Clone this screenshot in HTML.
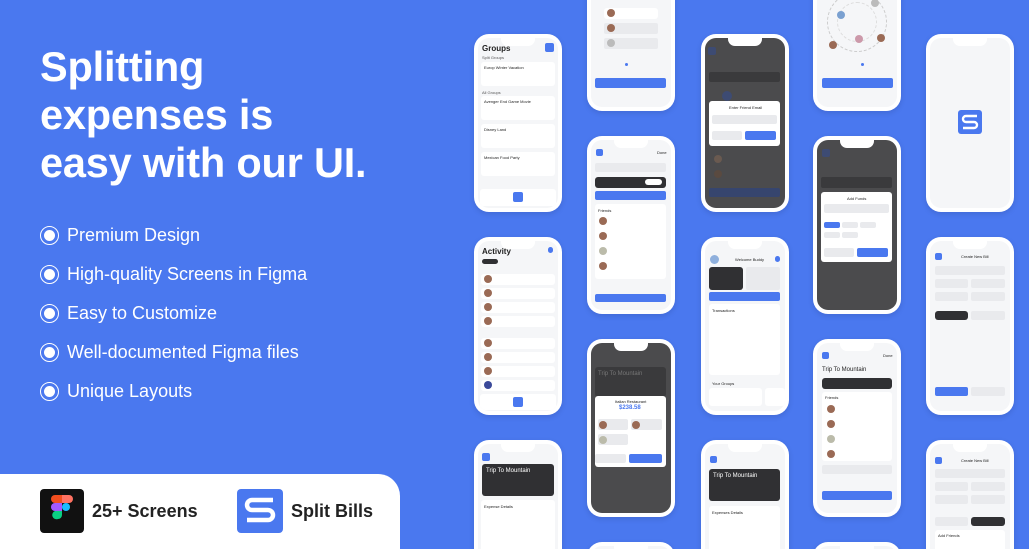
<!DOCTYPE html>
<html style="width:1029px;height:549px;overflow:hidden"><head><meta charset="utf-8"><style>
*{margin:0;padding:0;box-sizing:border-box}
body{width:1029px;height:549px;overflow:hidden;background:#4a78ef;font-family:"Liberation Sans",sans-serif;position:relative}
h1{position:absolute;left:40px;top:43px;color:#fff;font-size:41.5px;line-height:48px;font-weight:700;letter-spacing:-0.2px}
.li{position:absolute;left:40px;color:#fff;font-size:18px;height:20px;line-height:20px}
.li i{position:absolute;left:0;top:1px;width:19px;height:19px;border:1.5px solid #fff;border-radius:50%}
.li i:after{content:"";position:absolute;left:2.5px;top:2.5px;width:11px;height:11px;border-radius:50%;background:#fff}
.li span{position:absolute;left:27px;white-space:nowrap}
.bot{position:absolute;left:0;top:474px;width:400px;height:75px;background:#fff;border-top-right-radius:22px}
.ph{position:absolute;width:88px;height:178px;background:#fff;border-radius:15px;box-shadow:0 2px 6px rgba(0,0,30,.12);overflow:hidden}
.sc{position:absolute;left:4px;top:4px;width:80px;height:170px;background:#f5f6f8;border-radius:11px;overflow:hidden}
.nt{position:absolute;left:27px;top:4px;width:34px;height:8px;background:#fff;border-radius:0 0 7px 7px;z-index:5}
.dk .sc{background:#4b4b4d}
.a{position:absolute}
.w{background:#fff;border-radius:3px}
.g{background:#e9eaed;border-radius:2px}
.b{background:#4a78ef;border-radius:2px}
.d{background:#303033;border-radius:3px}
.t{position:absolute;font-size:4px;color:#555;white-space:nowrap}
.tt{position:absolute;font-size:8px;font-weight:700;color:#222;white-space:nowrap}
.av{position:absolute;width:8px;height:8px;border-radius:50%;background:#9a6a55}
#wrap{position:absolute;left:0;top:0;width:1029px;height:549px;overflow:hidden}
</style></head><body><div id="wrap">
<h1>Splitting<br>expenses is<br>easy with our UI.</h1>
<div class="li" style="top:225px"><i></i><span>Premium Design</span></div>
<div class="li" style="top:264px"><i></i><span>High-quality Screens in Figma</span></div>
<div class="li" style="top:303px"><i></i><span>Easy to Customize</span></div>
<div class="li" style="top:342px"><i></i><span>Well-documented Figma files</span></div>
<div class="li" style="top:381px"><i></i><span>Unique Layouts</span></div>

<div class="bot">
 <div class="a" style="left:40px;top:15px;width:44px;height:44px;background:#111;border-radius:4px">
  <svg width="44" height="44" viewBox="0 0 44 44"><path d="M15 6h7v8h-7a4 4 0 0 1 0-8z" fill="#f24e1e"/><path d="M22 6h7a4 4 0 0 1 0 8h-7z" fill="#ff7262"/><path d="M15 14h7v8h-7a4 4 0 0 1 0-8z" fill="#a259ff"/><circle cx="26" cy="18" r="4" fill="#1abcfe"/><path d="M15 22h7v4a4 4 0 0 1-4 4a4 4 0 0 1-3-8z" fill="#0acf83"/></svg>
 </div>
 <div class="a" style="left:92px;top:27px;font-size:18px;font-weight:700;color:#222">25+ Screens</div>
 <div class="a" style="left:237px;top:15px;width:46px;height:44px;background:#4a78ef;border-radius:4px">
  <svg width="46" height="44" viewBox="0 0 46 44"><path d="M36 11H15a5 5 0 0 0 0 10h16a5 5 0 0 1 0 10H10" fill="none" stroke="#fff" stroke-width="4.5"/></svg>
 </div>
 <div class="a" style="left:291px;top:27px;font-size:18px;font-weight:700;color:#222">Split Bills</div>
</div>

<!-- Col1 -->
<div class="ph" style="left:474px;top:34px"><div class="nt"></div><div class="sc">
 <div class="tt" style="left:4px;top:6px">Groups</div><div class="a b" style="left:67px;top:5px;width:9px;height:9px"></div>
 <div class="t" style="left:4px;top:17px">Split Groups</div>
 <div class="a w" style="left:3px;top:24px;width:74px;height:24px"></div><div class="t" style="left:6px;top:27px;color:#222">Europ Winter Vacation</div>
 <div class="t" style="left:4px;top:52px">All Groups</div>
 <div class="a w" style="left:3px;top:58px;width:74px;height:24px"></div><div class="t" style="left:6px;top:61px;color:#222">Avenger End Game Movie</div>
 <div class="a w" style="left:3px;top:86px;width:74px;height:24px"></div><div class="t" style="left:6px;top:89px;color:#222">Disney Land</div>
 <div class="a w" style="left:3px;top:114px;width:74px;height:24px"></div><div class="t" style="left:6px;top:117px;color:#222">Mexican Food Party</div>
 <div class="a w" style="left:2px;top:151px;width:76px;height:17px"></div><div class="a b" style="left:35px;top:154px;width:10px;height:10px"></div>
</div></div>
<div class="ph" style="left:474px;top:237px"><div class="nt"></div><div class="sc">
 <div class="tt" style="left:4px;top:6px">Activity</div><div class="a b" style="left:70px;top:6px;width:5px;height:6px;border-radius:3px"></div>
 <div class="a d" style="left:4px;top:18px;width:16px;height:5px"></div>
 <div class="a w" style="left:3px;top:33px;width:74px;height:11px"></div><div class="av" style="left:6px;top:34px"></div>
 <div class="a w" style="left:3px;top:47px;width:74px;height:11px"></div><div class="av" style="left:6px;top:48px"></div>
 <div class="a w" style="left:3px;top:61px;width:74px;height:11px"></div><div class="av" style="left:6px;top:62px"></div>
 <div class="a w" style="left:3px;top:75px;width:74px;height:11px"></div><div class="av" style="left:6px;top:76px"></div>
 <div class="a w" style="left:3px;top:97px;width:74px;height:11px"></div><div class="av" style="left:6px;top:98px"></div>
 <div class="a w" style="left:3px;top:111px;width:74px;height:11px"></div><div class="av" style="left:6px;top:112px"></div>
 <div class="a w" style="left:3px;top:125px;width:74px;height:11px"></div><div class="av" style="left:6px;top:126px"></div>
 <div class="a w" style="left:3px;top:139px;width:74px;height:11px"></div><div class="av" style="left:6px;top:140px;background:#3b4a9a"></div>
 <div class="a w" style="left:2px;top:153px;width:76px;height:16px"></div><div class="a b" style="left:35px;top:156px;width:10px;height:10px"></div>
</div></div>
<div class="ph" style="left:474px;top:440px"><div class="nt"></div><div class="sc">
 <div class="a b" style="left:4px;top:9px;width:8px;height:8px"></div>
 <div class="a d" style="left:4px;top:20px;width:72px;height:32px"></div>
 <div class="t" style="left:8px;top:24px;color:#fff;font-size:6px">Trip To Mountain</div>
 <div class="a w" style="left:3px;top:56px;width:74px;height:60px"></div>
 <div class="t" style="left:6px;top:60px;color:#222">Expense Details</div>
</div></div>

<!-- Col2 -->
<div class="ph" style="left:587px;top:-67px"><div class="nt"></div><div class="sc">
 <div class="a w" style="left:13px;top:71px;width:54px;height:11px"></div><div class="av" style="left:16px;top:72px"></div>
 <div class="a g" style="left:13px;top:86px;width:54px;height:11px"></div><div class="av" style="left:16px;top:87px"></div>
 <div class="a g" style="left:13px;top:101px;width:54px;height:11px"></div><div class="av" style="left:16px;top:102px;background:#bbb"></div>
 <div class="a b" style="left:34px;top:126px;width:3px;height:3px;border-radius:50%"></div>
 <div class="a b" style="left:4px;top:141px;width:71px;height:10px"></div>
</div></div>
<div class="ph" style="left:587px;top:136px"><div class="nt"></div><div class="sc">
 <div class="a b" style="left:5px;top:9px;width:7px;height:7px"></div><div class="t" style="left:66px;top:10px;color:#222">Done</div>
 <div class="a g" style="left:4px;top:23px;width:71px;height:9px"></div>
 <div class="a d" style="left:4px;top:37px;width:71px;height:11px"></div><div class="a w" style="left:54px;top:39px;width:17px;height:6px"></div>
 <div class="a b" style="left:4px;top:51px;width:71px;height:9px"></div>
 <div class="a w" style="left:4px;top:64px;width:71px;height:75px"></div>
 <div class="t" style="left:7px;top:68px;color:#222">Friends</div>
 <div class="av" style="left:8px;top:77px"></div><div class="av" style="left:8px;top:92px"></div><div class="av" style="left:8px;top:107px;background:#bba"></div><div class="av" style="left:8px;top:122px"></div>
 <div class="a b" style="left:4px;top:154px;width:71px;height:8px"></div>
</div></div>
<div class="ph dk" style="left:587px;top:339px"><div class="nt"></div><div class="sc">
 <div class="a" style="left:4px;top:24px;width:71px;height:30px;background:#3a3a3c;border-radius:3px"></div>
 <div class="t" style="left:7px;top:28px;color:#777;font-size:6px">Trip To Mountain</div>
 <div class="a w" style="left:4px;top:53px;width:71px;height:71px"></div>
 <div class="t" style="left:24px;top:56px;color:#222">Italian Restaurant</div>
 <div class="t" style="left:28px;top:62px;color:#4a78ef;font-size:6px;font-weight:700">$238.58</div>
 <div class="a g" style="left:7px;top:76px;width:30px;height:11px"></div><div class="av" style="left:8px;top:78px"></div>
 <div class="a g" style="left:40px;top:76px;width:31px;height:11px"></div><div class="av" style="left:41px;top:78px"></div>
 <div class="a g" style="left:7px;top:91px;width:30px;height:11px"></div><div class="av" style="left:8px;top:93px;background:#bba"></div>
 <div class="a g" style="left:4px;top:111px;width:31px;height:9px"></div><div class="a b" style="left:38px;top:111px;width:33px;height:9px"></div>
</div></div>
<div class="ph" style="left:587px;top:542px"><div class="nt"></div><div class="sc"></div></div>

<!-- Col3 -->
<div class="ph dk" style="left:701px;top:34px"><div class="nt"></div><div class="sc">
 <div class="a" style="left:3px;top:9px;width:8px;height:8px;background:#3d4b73;border-radius:2px"></div>
 <div class="a" style="left:4px;top:34px;width:71px;height:10px;background:#3a3a3c;border-radius:2px"></div>
 <div class="a" style="left:17px;top:53px;width:10px;height:10px;background:#3d4b73;border-radius:50%"></div>
 <div class="a w" style="left:4px;top:63px;width:71px;height:45px"></div>
 <div class="t" style="left:24px;top:67px;color:#222">Enter Friend Email</div>
 <div class="a g" style="left:7px;top:77px;width:65px;height:9px"></div>
 <div class="a g" style="left:7px;top:93px;width:30px;height:9px"></div><div class="a b" style="left:40px;top:93px;width:31px;height:9px"></div>
 <div class="av" style="left:9px;top:117px;background:#6a5a50"></div><div class="av" style="left:9px;top:132px;background:#5a4a40"></div>
 <div class="a" style="left:4px;top:150px;width:71px;height:9px;background:#36456e;border-radius:2px"></div>
</div></div>
<div class="ph" style="left:701px;top:237px"><div class="nt"></div><div class="sc">
 <div class="a" style="left:5px;top:14px;width:9px;height:9px;border-radius:50%;background:#8fb0dd"></div>
 <div class="t" style="left:30px;top:16px;color:#222">Welcome Buddy</div>
 <div class="a b" style="left:70px;top:15px;width:5px;height:6px;border-radius:3px"></div>
 <div class="a d" style="left:4px;top:26px;width:34px;height:23px"></div>
 <div class="a g" style="left:41px;top:26px;width:34px;height:23px"></div>
 <div class="a b" style="left:4px;top:51px;width:71px;height:9px"></div>
 <div class="a w" style="left:4px;top:63px;width:71px;height:71px"></div>
 <div class="t" style="left:7px;top:67px;color:#222">Transactions</div>
 <div class="t" style="left:7px;top:140px;color:#222">Your Groups</div>
 <div class="a w" style="left:4px;top:147px;width:53px;height:18px"></div><div class="a w" style="left:60px;top:147px;width:20px;height:18px"></div>
</div></div>
<div class="ph" style="left:701px;top:440px"><div class="nt"></div><div class="sc">
 <div class="a b" style="left:5px;top:12px;width:7px;height:7px"></div>
 <div class="a d" style="left:4px;top:25px;width:71px;height:32px"></div>
 <div class="t" style="left:8px;top:29px;color:#fff;font-size:6px">Trip To Mountain</div>
 <div class="a w" style="left:4px;top:62px;width:71px;height:60px"></div>
 <div class="t" style="left:7px;top:66px;color:#222">Expenses Details</div>
</div></div>

<!-- Col4 -->
<div class="ph" style="left:813px;top:-67px"><div class="nt"></div><div class="sc">
 <div class="a" style="left:10px;top:55px;width:60px;height:60px;border:1px dashed #ccc;border-radius:50%"></div>
 <div class="a" style="left:20px;top:65px;width:40px;height:40px;border:1px dashed #ddd;border-radius:50%"></div>
 <div class="av" style="left:20px;top:74px;background:#7aa0d0"></div><div class="av" style="left:12px;top:104px"></div><div class="av" style="left:60px;top:97px"></div><div class="av" style="left:38px;top:98px;background:#c9a"></div><div class="av" style="left:54px;top:62px;background:#bbb"></div>
 <div class="a b" style="left:44px;top:126px;width:3px;height:3px;border-radius:50%"></div>
 <div class="a b" style="left:5px;top:141px;width:71px;height:10px"></div>
</div></div>
<div class="ph dk" style="left:813px;top:136px"><div class="nt"></div><div class="sc">
 <div class="a" style="left:5px;top:9px;width:8px;height:8px;background:#3d4b73;border-radius:2px"></div>
 <div class="a" style="left:4px;top:37px;width:71px;height:11px;background:#3a3a3c;border-radius:2px"></div>
 <div class="a w" style="left:4px;top:52px;width:71px;height:70px"></div>
 <div class="t" style="left:30px;top:56px;color:#222">Add Funds</div>
 <div class="a g" style="left:7px;top:64px;width:65px;height:9px"></div>
 <div class="a b" style="left:7px;top:82px;width:16px;height:6px"></div><div class="a g" style="left:25px;top:82px;width:16px;height:6px"></div><div class="a g" style="left:43px;top:82px;width:16px;height:6px"></div>
 <div class="a g" style="left:7px;top:92px;width:16px;height:6px"></div><div class="a g" style="left:25px;top:92px;width:16px;height:6px"></div>
 <div class="a g" style="left:7px;top:108px;width:30px;height:9px"></div><div class="a b" style="left:40px;top:108px;width:31px;height:9px"></div>
</div></div>
<div class="ph" style="left:813px;top:339px"><div class="nt"></div><div class="sc">
 <div class="a b" style="left:5px;top:9px;width:7px;height:7px"></div><div class="t" style="left:66px;top:10px;color:#222">Done</div>
 <div class="t" style="left:5px;top:24px;color:#222;font-size:6px">Trip To Mountain</div>
 <div class="a d" style="left:5px;top:35px;width:70px;height:11px"></div>
 <div class="a w" style="left:5px;top:49px;width:70px;height:69px"></div>
 <div class="t" style="left:8px;top:52px;color:#222">Friends</div>
 <div class="av" style="left:10px;top:62px"></div><div class="av" style="left:10px;top:77px"></div><div class="av" style="left:10px;top:92px;background:#bba"></div><div class="av" style="left:10px;top:107px"></div>
 <div class="a g" style="left:5px;top:122px;width:70px;height:9px"></div>
 <div class="a b" style="left:5px;top:148px;width:70px;height:9px"></div>
</div></div>
<div class="ph" style="left:813px;top:542px"><div class="nt"></div><div class="sc"></div></div>

<!-- Col5 -->
<div class="ph" style="left:926px;top:34px"><div class="nt"></div><div class="sc">
 <div class="a b" style="left:28px;top:72px;width:24px;height:24px;border-radius:3px"></div>
 <svg class="a" style="left:28px;top:72px" width="24" height="24" viewBox="0 0 24 24"><path d="M19 6H8a3 3 0 0 0 0 6h8a3 3 0 0 1 0 6H5" fill="none" stroke="#fff" stroke-width="2.4"/></svg>
</div></div>
<div class="ph" style="left:926px;top:237px"><div class="nt"></div><div class="sc">
 <div class="a b" style="left:5px;top:12px;width:7px;height:7px"></div><div class="t" style="left:31px;top:13px;color:#222">Create New Bill</div>
 <div class="a g" style="left:5px;top:25px;width:70px;height:9px"></div>
 <div class="a g" style="left:5px;top:38px;width:33px;height:9px"></div><div class="a g" style="left:41px;top:38px;width:34px;height:9px"></div>
 <div class="a g" style="left:5px;top:51px;width:33px;height:9px"></div><div class="a g" style="left:41px;top:51px;width:34px;height:9px"></div>
 <div class="a d" style="left:5px;top:70px;width:33px;height:9px"></div><div class="a g" style="left:41px;top:70px;width:34px;height:9px"></div>
 <div class="a b" style="left:5px;top:146px;width:33px;height:9px"></div><div class="a g" style="left:41px;top:146px;width:34px;height:9px"></div>
</div></div>
<div class="ph" style="left:926px;top:440px"><div class="nt"></div><div class="sc">
 <div class="a b" style="left:5px;top:13px;width:7px;height:7px"></div><div class="t" style="left:31px;top:14px;color:#222">Create New Bill</div>
 <div class="a g" style="left:5px;top:25px;width:70px;height:9px"></div>
 <div class="a g" style="left:5px;top:38px;width:33px;height:9px"></div><div class="a g" style="left:41px;top:38px;width:34px;height:9px"></div>
 <div class="a g" style="left:5px;top:51px;width:33px;height:9px"></div><div class="a g" style="left:41px;top:51px;width:34px;height:9px"></div>
 <div class="a g" style="left:5px;top:73px;width:33px;height:9px"></div><div class="a d" style="left:41px;top:73px;width:34px;height:9px"></div>
 <div class="a w" style="left:5px;top:86px;width:70px;height:40px"></div>
 <div class="t" style="left:8px;top:89px;color:#222">Add Friends</div>
</div></div>
</div></body></html>
